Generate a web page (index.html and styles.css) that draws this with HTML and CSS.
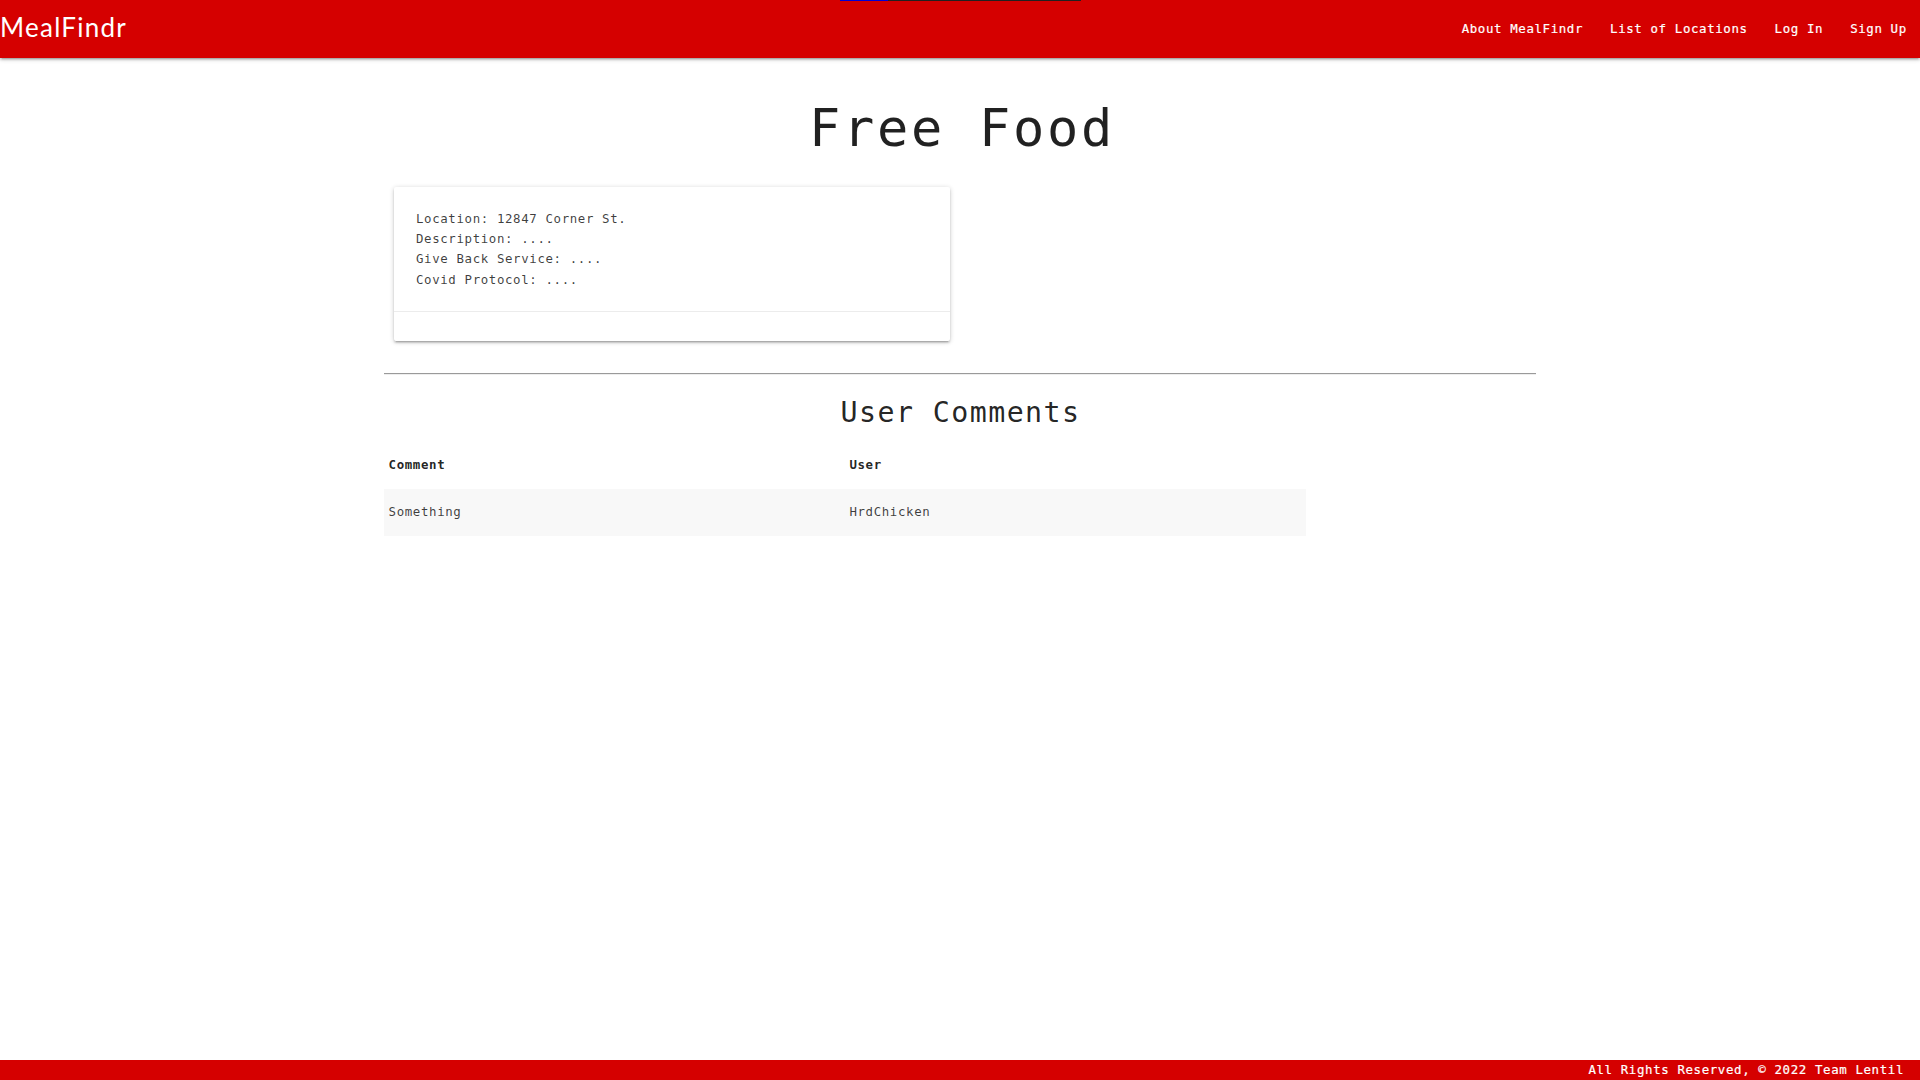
FILE: index.html
```html
<!DOCTYPE html>
<html lang="en">
<head>
<meta charset="utf-8">
<title>MealFindr</title>
<link rel="stylesheet" href="styles.css">
</head>
<body>
<nav class="navbar">
  <a class="brand">MealFindr</a>
  <ul class="nav-links">
    <li>About MealFindr</li>
    <li>List of Locations</li>
    <li>Log In</li>
    <li>Sign Up</li>
  </ul>
  <div class="progress"><div class="progress-fill"></div></div>
</nav>
<main class="container">
  <h1 class="title">Free Food</h1>
  <section class="card">
    <div class="card-content">
      <p>Location: 12847 Corner St.</p>
      <p>Description: ....</p>
      <p>Give Back Service: ....</p>
      <p>Covid Protocol: ....</p>
    </div>
    <div class="card-action"></div>
  </section>
  <hr class="divider">
  <h4 class="subtitle">User Comments</h4>
  <table class="comments">
    <thead><tr><th>Comment</th><th>User</th></tr></thead>
    <tbody><tr><td>Something</td><td>HrdChicken</td></tr></tbody>
  </table>
</main>
<footer class="footer">All Rights Reserved, © 2022 Team Lentil</footer>
</body>
</html>
```
FILE: styles.css
```css
* { box-sizing: border-box; }
body {
  margin: 0;
  min-height: 100vh;
  display: flex;
  flex-direction: column;
  background: #fff;
  color: rgba(0, 0, 0, .87);
  font: 12.42px/20.25px "DejaVu Sans Mono", "Liberation Mono", monospace;
  letter-spacing: .623px;
}
.navbar {
  position: relative;
  height: 58px;
  flex: none;
  display: flex;
  justify-content: space-between;
  background: #d50000;
  color: #fff;
  box-shadow: 0 2px 2px 0 rgba(0,0,0,.14), 0 3px 1px -2px rgba(0,0,0,.12), 0 1px 5px 0 rgba(0,0,0,.2);
}
.brand {
  font: 26px/55px Lato, sans-serif;
  letter-spacing: 1.25px;
}
.nav-links {
  display: flex;
  margin: 0;
  padding: 0;
  list-style: none;
  line-height: 57.6px;
  -webkit-text-stroke: .2px #fff;
}
.nav-links li { padding: 0 13.2px 0 13.8px; }
.progress {
  position: absolute;
  top: 0;
  left: 840px;
  width: 241px;
  height: 1px;
  background: #212121;
}
.progress-fill { width: 48px; height: 1px; background: #0000d5; }
.container {
  width: 60%;
  margin: 0 auto;
  flex: 1;
}
.title {
  margin: 39px 0 28px;
  padding-left: 4px;
  font-size: 52px;
  line-height: 62px;
  font-weight: 400;
  letter-spacing: 2.7px;
  text-align: center;
}
.card {
  margin: 0 0 32px 10px;
  width: 556px;
  border-radius: 2px;
  box-shadow: 0 2px 2px 0 rgba(0,0,0,.14), 0 3px 1px -2px rgba(0,0,0,.12), 0 1px 5px 0 rgba(0,0,0,.2);
}
.card-content { height: 124px; padding: 21.8px 22px; color: rgba(0, 0, 0, .76); }
.card-content p { margin: 0; }
.card-action { height: 30px; border-top: 1px solid rgba(160,160,160,.2); }
.divider { margin: 0; height: 2px; border: 0; border-top: 1px solid #9a9a9a; border-bottom: 1px solid #eee; }
.subtitle {
  margin: 21px 0 10px;
  padding-left: 1px;
  font-size: 28.3px;
  line-height: 34px;
  font-weight: 400;
  letter-spacing: 1.42px;
  text-align: center;
}
.comments {
  width: 80%;
  border-collapse: collapse;
  table-layout: fixed;
}
.comments th, .comments td {
  height: 47px;
  padding: 0 4.6px;
  text-align: left;
}
.comments th { height: 49px; padding-top: 2px; }
.comments td { color: rgba(0, 0, 0, .76); }
.comments tbody tr { background: #f8f8f8; }
.footer {
  height: 20px;
  flex: none;
  padding-right: 16px;
  background: #d50000;
  color: #fff;
  line-height: 20px;
  text-align: right;
  -webkit-text-stroke: .2px #fff;
}
```
